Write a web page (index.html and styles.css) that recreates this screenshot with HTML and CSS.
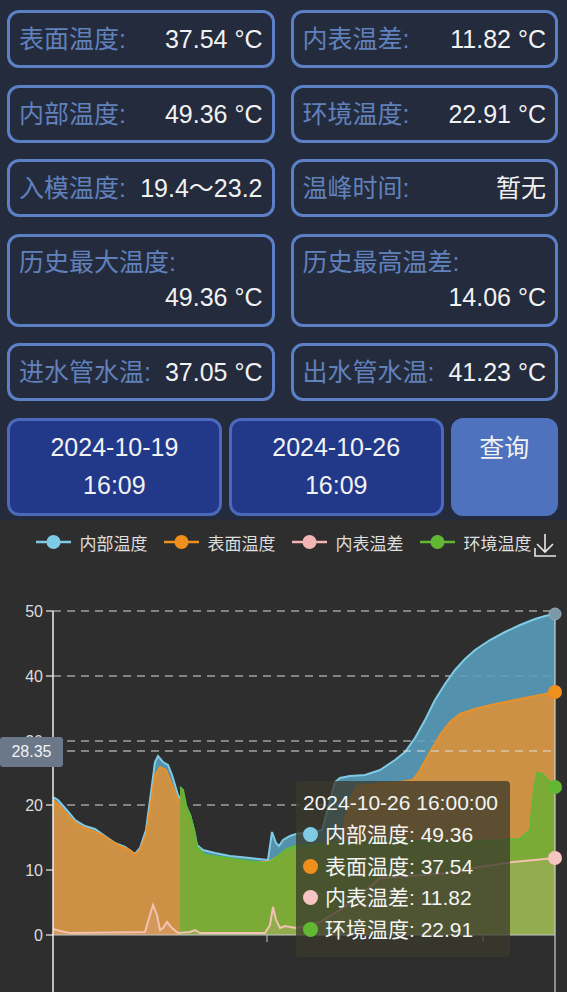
FILE: index.html
```html
<!DOCTYPE html>
<html lang="zh-CN">
<head>
    <meta charset="UTF-8">
    <meta name="viewport" content="width=device-width, initial-scale=1.0">
    <title>温度监测</title>
    <link rel="stylesheet" href="styles.css">
</head>
<body>
    <div class="panel">
        <div class="cards">
            <div class="card"><span class="label">表面温度:</span><span class="value">37.54 °C</span></div>
            <div class="card"><span class="label">内表温差:</span><span class="value">11.82 °C</span></div>
            <div class="card"><span class="label">内部温度:</span><span class="value">49.36 °C</span></div>
            <div class="card"><span class="label">环境温度:</span><span class="value">22.91 °C</span></div>
            <div class="card"><span class="label">入模温度:</span><span class="value">19.4～23.2</span></div>
            <div class="card"><span class="label">温峰时间:</span><span class="value">暂无</span></div>
            <div class="card tall"><span class="label">历史最大温度:</span><span class="value">49.36 °C</span></div>
            <div class="card tall"><span class="label">历史最高温差:</span><span class="value">14.06 °C</span></div>
            <div class="card"><span class="label">进水管水温:</span><span class="value">37.05 °C</span></div>
            <div class="card"><span class="label">出水管水温:</span><span class="value">41.23 °C</span></div>
        </div>
        <div class="actions">
            <div class="date-btn">2024-10-19<br>16:09</div>
            <div class="date-btn">2024-10-26<br>16:09</div>
            <div class="query-btn">查询</div>
        </div>
    </div>

    <div class="chart">
        <div class="legend">
            <div class="legend-item">
                <svg width="35" height="16" viewBox="0 0 35 16"><line x1="0" y1="8" x2="35" y2="8" stroke="#7fcbe6" stroke-width="2.5"/><circle cx="17.5" cy="8" r="7" fill="#7fcbe6"/></svg>
                <span>内部温度</span>
            </div>
            <div class="legend-item">
                <svg width="35" height="16" viewBox="0 0 35 16"><line x1="0" y1="8" x2="35" y2="8" stroke="#f0901c" stroke-width="2.5"/><circle cx="17.5" cy="8" r="7" fill="#f0901c"/></svg>
                <span>表面温度</span>
            </div>
            <div class="legend-item">
                <svg width="35" height="16" viewBox="0 0 35 16"><line x1="0" y1="8" x2="35" y2="8" stroke="#f4b6b4" stroke-width="2.5"/><circle cx="17.5" cy="8" r="7" fill="#f4b6b4"/></svg>
                <span>内表温差</span>
            </div>
            <div class="legend-item">
                <svg width="35" height="16" viewBox="0 0 35 16"><line x1="0" y1="8" x2="35" y2="8" stroke="#62b833" stroke-width="2.5"/><circle cx="17.5" cy="8" r="7" fill="#62b833"/></svg>
                <span>环境温度</span>
            </div>
        </div>

        <svg class="download" width="24" height="26" viewBox="0 0 24 26">
            <path d="M11 2 V20 M3 12 L11 20 L19 12" fill="none" stroke="#e8e8e8" stroke-width="1.6"/>
            <path d="M1 16 V24 H22" fill="none" stroke="#e8e8e8" stroke-width="1.6"/>
        </svg>

        <svg class="plot" width="567" height="432" viewBox="0 560 567 432">
            <!-- grid -->
            <g stroke="#d8d8d8" stroke-width="1" stroke-dasharray="8 6">
                <line x1="53" y1="611" x2="555" y2="611"/>
                <line x1="53" y1="676" x2="555" y2="676"/>
                <line x1="53" y1="741" x2="555" y2="741"/>
                <line x1="53" y1="805" x2="555" y2="805"/>
                <line x1="53" y1="870" x2="555" y2="870"/>
            </g>

            <!-- 内部温度 -->
            <path fill="#5a9fbf" fill-opacity="0.88" d="M53,935 L53,797 L58,800 L65,808 L75,820 L85,826 L95,829 L105,836 L115,843 L125,847 L135,854 L140,848 L146,830 L150,800 L155,762 L158,756 L163,762 L168,765 L172,775 L178,795 L185,807 L190,815 L194,830 L197,845 L203,850 L215,853 L230,856 L250,858 L268,860 L272,832 L276,843 L279,846 L283,840 L290,836 L296,834 L310,832 L322,830 L328,808 L335,782 L340,778 L350,776 L365,775 L380,770 L395,760 L405,752 L415,738 L425,720 L435,700 L445,684 L455,670 L465,659 L475,650 L490,640 L505,632 L520,625 L535,619 L545,616 L555,614 L555,935 Z"/>
            <polyline fill="none" stroke="#7fcbe6" stroke-width="2" points="53,797 58,800 65,808 75,820 85,826 95,829 105,836 115,843 125,847 135,854 140,848 146,830 150,800 155,762 158,756 163,762 168,765 172,775 178,795 185,807 190,815 194,830 197,845 203,850 215,853 230,856 250,858 268,860 272,832 276,843 279,846 283,840 290,836 296,834 310,832 322,830 328,808 335,782 340,778 350,776 365,775 380,770 395,760 405,752 415,738 425,720 435,700 445,684 455,670 465,659 475,650 490,640 505,632 520,625 535,619 545,616 555,614"/>

            <!-- 表面温度 -->
            <path fill="#d4913f" fill-opacity="0.95" d="M53,935 L53,800 L60,806 L70,818 L80,826 L90,830 L100,834 L110,840 L120,846 L130,850 L135,855 L140,850 L146,835 L150,810 L155,775 L160,767 L166,770 L172,785 L178,800 L185,812 L190,822 L197,852 L210,857 L230,860 L250,862 L268,862 L275,858 L285,852 L296,852 L320,848 L340,840 L350,800 L357,786 L380,784 L400,782 L413,780 L420,770 L430,752 L440,735 L450,722 L460,714 L475,709 L495,704 L515,700 L535,696 L555,692 L555,935 Z"/>
            <polyline fill="none" stroke="#e8902a" stroke-width="2" points="53,800 60,806 70,818 80,826 90,830 100,834 110,840 120,846 130,850 135,855 140,850 146,835 150,810 155,775 160,767 166,770 172,785 178,800 185,812 190,822 197,852 210,857 230,860 250,862 268,862 275,858 285,852 296,852 320,848 340,840 350,800 357,786 380,784 400,782 413,780 420,770 430,752 440,735 450,722 460,714 475,709 495,704 515,700 535,696 555,692"/>

            <!-- 环境温度 -->
            <path fill="#78aa36" fill-opacity="0.97" d="M180,935 L180,787 L183,790 L186,805 L190,815 L194,830 L197,847 L205,855 L220,857 L240,860 L265,863 L270,862 L276,858 L285,850 L295,846 L310,845 L340,842 L380,840 L420,841 L460,842 L500,840 L520,839 L530,830 L534,790 L537,773 L542,774 L546,778 L550,782 L555,787 L555,935 Z"/>
            <polyline fill="none" stroke="#62b833" stroke-width="2" points="180,787 183,790 186,805 190,815 194,830 197,847 205,855 220,857 240,860 265,863 270,862 276,858 285,850 295,846 310,845 340,842 380,840 420,841 460,842 500,840 520,839 530,830 534,790 537,773 542,774 546,778 550,782 555,787"/>

            <!-- 内表温差 -->
            <path fill="#f2b4b0" fill-opacity="0.2" d="M53,935 L53,929 L60,931 L70,933 L145,932 L150,915 L153,905 L157,915 L160,930 L163,928 L167,922 L172,928 L178,933 L190,932 L195,930 L200,933 L265,933 L270,925 L273,907 L276,920 L280,928 L285,926 L296,928 L320,922 L340,910 L360,895 L380,878 L410,876 L447,873 L480,867 L513,862 L555,858 L555,935 Z"/>
            <polyline fill="none" stroke="#f4c2b2" stroke-width="2" points="53,929 60,931 70,933 145,932 150,915 153,905 157,915 160,930 163,928 167,922 172,928 178,933 190,932 195,930 200,933 265,933 270,925 273,907 276,920 280,928 285,926 296,928 320,922 340,910 360,895 380,878 410,876 447,873 480,867 513,862 555,858"/>

            <!-- axes -->
            <line x1="53" y1="935" x2="555" y2="935" stroke="#c8c8c8" stroke-width="1"/>
            <line x1="267" y1="935" x2="267" y2="942" stroke="#c8c8c8" stroke-width="1"/>
            <line x1="483" y1="935" x2="483" y2="942" stroke="#c8c8c8" stroke-width="1"/>
            <line x1="53" y1="611" x2="53" y2="992" stroke="#eeeeee" stroke-width="1.5"/>
            <g stroke="#eeeeee" stroke-width="1.2">
                <line x1="46" y1="611" x2="53" y2="611"/>
                <line x1="46" y1="676" x2="53" y2="676"/>
                <line x1="46" y1="741" x2="53" y2="741"/>
                <line x1="46" y1="805" x2="53" y2="805"/>
                <line x1="46" y1="870" x2="53" y2="870"/>
                <line x1="46" y1="935" x2="53" y2="935"/>
            </g>
            <g class="axis-label" text-anchor="end">
                <text x="43" y="611" dy="0.36em">50</text>
                <text x="43" y="676" dy="0.36em">40</text>
                <text x="43" y="741" dy="0.36em">30</text>
                <text x="43" y="805" dy="0.36em">20</text>
                <text x="43" y="870" dy="0.36em">10</text>
                <text x="43" y="935" dy="0.36em">0</text>
            </g>

            <!-- axis pointer -->
            <line x1="53" y1="751" x2="555" y2="751" stroke="#e0e0e0" stroke-width="1" stroke-dasharray="8 6"/>
            <line x1="555" y1="611" x2="555" y2="992" stroke="#d0d0d0" stroke-width="1.2"/>
            <circle cx="555" cy="614" r="6" fill="#7a9aa8" stroke="#9ab" stroke-width="1"/>
            <circle cx="555" cy="692" r="7" fill="#f0901c"/>
            <circle cx="555" cy="787" r="7" fill="#62b833"/>
            <circle cx="555" cy="858" r="7" fill="#f6c4c2"/>
        </svg>

        <div class="pointer-label">28.35</div>

        <div class="tooltip">
            <div class="tooltip-title">2024-10-26 16:00:00</div>
            <div class="tooltip-row"><span class="dot dot-inner"></span>内部温度: 49.36</div>
            <div class="tooltip-row"><span class="dot dot-surface"></span>表面温度: 37.54</div>
            <div class="tooltip-row"><span class="dot dot-diff"></span>内表温差: 11.82</div>
            <div class="tooltip-row"><span class="dot dot-env"></span>环境温度: 22.91</div>
        </div>
    </div>
</body>
</html>
```

FILE: styles.css
```css
body {
    margin: 0;
    padding: 0;
    width: 567px;
    font-family: "Liberation Sans", "Noto Sans CJK SC", sans-serif;
    background-color: #2e2e2e;
}

.panel {
    background-color: #242b3d;
    padding: 10px 9px 4.5px 7px;
}

.cards {
    display: grid;
    grid-template-columns: 1fr 1fr;
    column-gap: 16px;
    row-gap: 16.5px;
}

.card {
    box-sizing: border-box;
    height: 58px;
    border: 3px solid #5b80c6;
    border-radius: 12px;
    padding: 0 9px 0 9px;
    display: flex;
    justify-content: space-between;
    align-items: center;
    font-size: 25px;
}

.card.tall {
    height: 93px;
    flex-direction: column;
    align-items: stretch;
    justify-content: space-between;
    padding-top: 8px;
    padding-bottom: 10px;
}

.card.tall .value {
    text-align: right;
}

.label {
    color: #6081bb;
    line-height: 34px;
    white-space: nowrap;
}

.value {
    color: #f2f2f2;
    line-height: 34px;
    white-space: nowrap;
}

.actions {
    display: grid;
    grid-template-columns: 2fr 2fr 1fr;
    gap: 7px;
    margin-top: 16.5px;
    height: 98px;
}

.date-btn,
.query-btn {
    box-sizing: border-box;
    border-radius: 12px;
    color: #f2f2f2;
    font-size: 25px;
    line-height: 38px;
    text-align: center;
}

.date-btn {
    background-color: #22398a;
    border: 3px solid #4b69bd;
    padding-top: 7px;
}

.query-btn {
    background-color: #4e72be;
    padding-top: 11px;
}

.chart {
    position: relative;
    height: 472px;
    background-color: #2e2e2e;
    overflow: hidden;
}

.legend {
    height: 40px;
    padding-top: 4px;
    box-sizing: border-box;
    display: flex;
    justify-content: center;
    align-items: center;
    gap: 16px;
}

.legend-item {
    display: flex;
    align-items: center;
    gap: 9px;
    color: #dddddd;
    font-size: 17px;
    font-family: "Noto Sans CJK SC", sans-serif;
}

.legend-item svg {
    display: block;
}

.download {
    position: absolute;
    right: 9px;
    top: 12px;
}

.plot {
    display: block;
}

.axis-label {
    font-family: "Liberation Sans", sans-serif;
    font-size: 16px;
    fill: #dddddd;
}

.pointer-label {
    position: absolute;
    left: 0;
    top: 217px;
    width: 63px;
    height: 30px;
    background-color: #6b7889;
    border-radius: 3px;
    color: #f2f2f2;
    font-size: 16px;
    line-height: 30px;
    text-align: center;
}

.tooltip {
    position: absolute;
    left: 296px;
    top: 261px;
    width: 214px;
    height: 176px;
    box-sizing: border-box;
    padding: 6px 0 0 7px;
    background-color: rgba(58, 56, 44, 0.76);
    border-radius: 4px;
    color: #f4f4f4;
    font-size: 21px;
}

.tooltip-title {
    line-height: 32px;
    white-space: nowrap;
}

.tooltip-row {
    display: flex;
    align-items: center;
    line-height: 31.5px;
    white-space: nowrap;
}

.dot {
    width: 15px;
    height: 15px;
    border-radius: 50%;
    margin-right: 7px;
    flex: none;
}

.dot-inner {
    background-color: #7fcbe6;
}

.dot-surface {
    background-color: #f0901c;
}

.dot-diff {
    background-color: #f6c4c2;
}

.dot-env {
    background-color: #62b833;
}
```
